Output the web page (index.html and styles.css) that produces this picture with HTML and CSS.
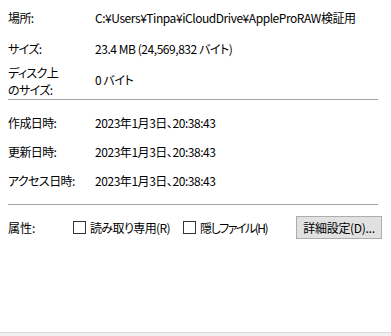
FILE: index.html
```html
<!DOCTYPE html>
<html lang="ja">
<head>
<meta charset="utf-8">
<link rel="stylesheet" href="styles.css">
</head>
<body>
<div class="page">
  <div class="props">
    <div class="row r1"><span class="label">場所:</span><span class="value">C:¥Users¥Tinpa¥iCloudDrive¥AppleProRAW検証用</span></div>
    <div class="row r2"><span class="label">サイズ:</span><span class="value">23.4 MB (24,569,832 バイト)</span></div>
    <div class="row r3"><span class="label two">ディスク上<br>のサイズ:</span><span class="value v3">0 バイト</span></div>
    <div class="sep s1"></div>
    <div class="dates">
      <div class="row rd"><span class="label">作成日時:</span><span class="value">2023年1月3日、20:38:43</span></div>
      <div class="row rd"><span class="label">更新日時:</span><span class="value">2023年1月3日、20:38:43</span></div>
      <div class="row rd"><span class="label">アクセス日時:</span><span class="value">2023年1月3日、20:38:43</span></div>
    </div>
    <div class="sep s2"></div>
    <div class="attrs">
      <span class="alabel">属性:</span>
      <label class="check c1"><span class="box"></span><span class="ctext t1">読み取り専用(R)</span></label>
      <label class="check c2"><span class="box"></span><span class="ctext t2">隠しファイル(H)</span></label>
      <span class="button">詳細設定(D)...</span>
    </div>
  </div>
  <div class="footer"></div>
</div>
</body>
</html>
```
FILE: styles.css
```css
html, body {
  margin: 0;
  padding: 0;
  background: #ffffff;
}
body {
  font-family: "Noto Sans CJK JP", "Noto Sans", sans-serif;
  font-size: 12px;
  font-feature-settings: "palt";
  color: #000000;
}
.page {
  width: 391px;
  height: 336px;
  display: flex;
  flex-direction: column;
  overflow: hidden;
}
.props {
  flex: 1;
  padding-left: 8px;
}
.row {
  display: flex;
  align-items: center;
}
.label {
  width: 87px;
  flex: none;
  white-space: nowrap;
  letter-spacing: -0.6px;
}
.value {
  white-space: nowrap;
  letter-spacing: -0.45px;
}
.r1 { height: 34px; }
.r2 { height: 28px; }
.r3 {
  height: 36px;
  align-items: flex-start;
  padding-top: 2px;
  box-sizing: border-box;
}
.label.two { line-height: 17px; }
.v3 { line-height: 15px; padding-top: 7.5px; }
.sep {
  height: 1px;
  width: 370px;
  background: #a0a0a0;
}
.s1 { margin-top: 1px; }
.dates { padding-top: 8px; }
.rd { height: 29px; }
.s2 { margin-top: 9px; }
.attrs {
  margin-top: 11px;
  height: 23px;
  display: flex;
  align-items: center;
}
.alabel {
  width: 65px;
  flex: none;
}
.check {
  display: flex;
  align-items: center;
  white-space: nowrap;
}
.box {
  width: 11px;
  height: 11px;
  border: 1px solid #333333;
  background: #ffffff;
  margin-right: 4px;
  flex: none;
}
.t1 { letter-spacing: -0.6px; }
.t2 { letter-spacing: -1.5px; }
.c1 { margin-right: 13px; }
.c2 { margin-right: auto; }
.button {
  width: 84px;
  height: 21px;
  border: 1px solid #adadad;
  background: #e1e1e1;
  display: flex;
  align-items: center;
  justify-content: center;
  margin-right: 9px;
  white-space: nowrap;
  flex: none;
  letter-spacing: -0.3px;
}
.footer {
  height: 3px;
  border-top: 1px solid #dadada;
  background: #f0f0f0;
}
```
